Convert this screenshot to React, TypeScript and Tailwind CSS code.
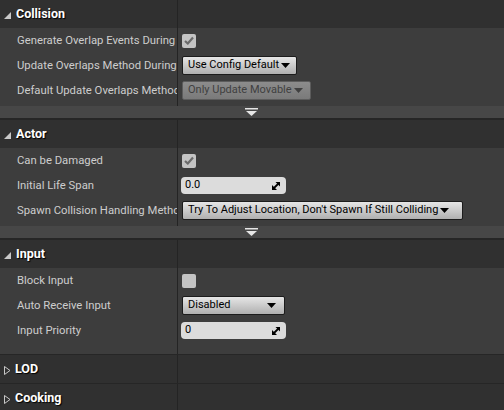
import React from 'react';

const Divider = () => <div className="w-px shrink-0 bg-[#242424]" />;

function Header({ title, open }: { title: string; open?: boolean }) {
  return (
    <div className="flex h-[28px] bg-[#303030]">
      <div className="flex w-[177px] shrink-0 items-center pl-[4px]">
        {open ? (
          <svg width="7" height="7" viewBox="0 0 7 7" className="mr-[5px] mt-[2px]">
            <polygon points="7,0 7,7 0,7" fill="#c8c8c8" />
          </svg>
        ) : (
          <svg width="7" height="9" viewBox="0 0 7 9" className="mr-[4px] mt-[2px]">
            <polygon points="0.5,0.5 6,4.5 0.5,8.5" fill="none" stroke="#c8c8c8" strokeWidth="1" />
          </svg>
        )}
        <span className="text-[12.5px] font-bold text-white [text-shadow:1px_1px_1px_#000]">{title}</span>
      </div>
      <Divider />
      <div className="flex-1" />
    </div>
  );
}

function Row({ label, children }: { label: string; children?: React.ReactNode }) {
  return (
    <div className="flex h-[25px] bg-[#3d3d3d]">
      <div className="flex w-[177px] shrink-0 items-center overflow-hidden whitespace-nowrap pl-[17px] pt-px text-[11.3px] text-[#cdcdcd]">
        {label}
      </div>
      <Divider />
      <div className="flex flex-1 items-center">{children}</div>
    </div>
  );
}

function Pad({ h }: { h: string }) {
  return (
    <div className={`flex bg-[#3d3d3d] ${h}`}>
      <div className="w-[177px] shrink-0" />
      <Divider />
    </div>
  );
}

function Advanced() {
  return (
    <div className="flex h-[12px] items-center justify-center bg-[#474747] pr-[2px]">
      <svg width="13" height="8" viewBox="0 0 13 8">
        <rect x="0" y="0" width="13" height="1.5" fill="#e6e6e6" />
        <polygon points="1,3 12,3 6.5,8" fill="#e6e6e6" />
      </svg>
    </div>
  );
}

function Check({ checked }: { checked?: boolean }) {
  return (
    <div className="ml-[4px] flex h-[14px] w-[14px] items-center justify-center rounded-[2px] bg-[#c4c4c4]">
      {checked && (
        <svg width="10" height="9" viewBox="0 0 10 9">
          <polyline points="1,5 3.8,7.5 9,1.5" fill="none" stroke="#6b6b6b" strokeWidth="2.2" />
        </svg>
      )}
    </div>
  );
}

function Combo({ text, w, disabled, spread }: { text: string; w: string; disabled?: boolean; spread?: boolean }) {
  return (
    <div
      className={`ml-[4px] flex h-[19px] items-center rounded-[2px] border pl-[5px] pr-[5px] text-[11px] ${w} ${
        spread ? 'justify-between' : 'gap-[2px]'
      } ${
        disabled
          ? 'border-[#5c5c5c] bg-gradient-to-b from-[#8c8c8c] to-[#7a7a7a] text-[#404040]'
          : 'border-[#1c1c1c] bg-gradient-to-b from-[#e6e6e6] to-[#b0b0b0] text-black'
      }`}
    >
      <span className="whitespace-nowrap">{text}</span>
      <svg width="9" height="5" viewBox="0 0 9 5" className={spread ? 'mr-[3px] shrink-0' : 'shrink-0'}>
        <polygon points="0,0 9,0 4.5,5" fill={disabled ? '#404040' : '#000'} />
      </svg>
    </div>
  );
}

function NumBox({ value }: { value: string }) {
  return (
    <div className="ml-[3px] flex h-[17px] w-[105px] items-center justify-between rounded-[4px] bg-[#dcdcdc] pl-[4px] pr-[6px] text-[11px] text-black">
      <span>{value}</span>
      <svg width="8" height="8" viewBox="0 0 8 8">
        <polygon points="3.5,0 8,0 8,4.5" fill="#000" />
        <polygon points="0,3 0,8 5,8" fill="#000" />
        <line x1="1" y1="7" x2="7" y2="1" stroke="#000" strokeWidth="1.8" />
      </svg>
    </div>
  );
}

const Sep = () => <div className="h-[2px] bg-[#262626]" />;

export default function App() {
  return (
    <div className="h-[410px] w-[504px] overflow-hidden bg-[#262626] font-[Roboto,sans-serif]">
      <Header title="Collision" open />
      <Row label="Generate Overlap Events During">
        <Check checked />
      </Row>
      <Row label="Update Overlaps Method During">
        <Combo text="Use Config Default" w="w-[115px]" />
      </Row>
      <Row label="Default Update Overlaps Method">
        <Combo text="Only Update Movable" w="w-[129px]" disabled />
      </Row>
      <Pad h="h-[3px]" />
      <Advanced />
      <Sep />

      <Header title="Actor" open />
      <Row label="Can be Damaged">
        <Check checked />
      </Row>
      <Row label="Initial Life Span">
        <NumBox value="0.0" />
      </Row>
      <Row label="Spawn Collision Handling Method">
        <Combo text="Try To Adjust Location, Don't Spawn If Still Colliding" w="w-[281px]" />
      </Row>
      <Pad h="h-[3px]" />
      <Advanced />
      <Sep />

      <Header title="Input" open />
      <Row label="Block Input">
        <Check />
      </Row>
      <Row label="Auto Receive Input">
        <Combo text="Disabled" w="w-[103px]" spread />
      </Row>
      <Row label="Input Priority">
        <NumBox value="0" />
      </Row>
      <Pad h="h-[11px]" />
      <div className="h-px bg-[#262626]" />

      <Header title="LOD" />
      <div className="h-px bg-[#262626]" />
      <Header title="Cooking" />
    </div>
  );
}
